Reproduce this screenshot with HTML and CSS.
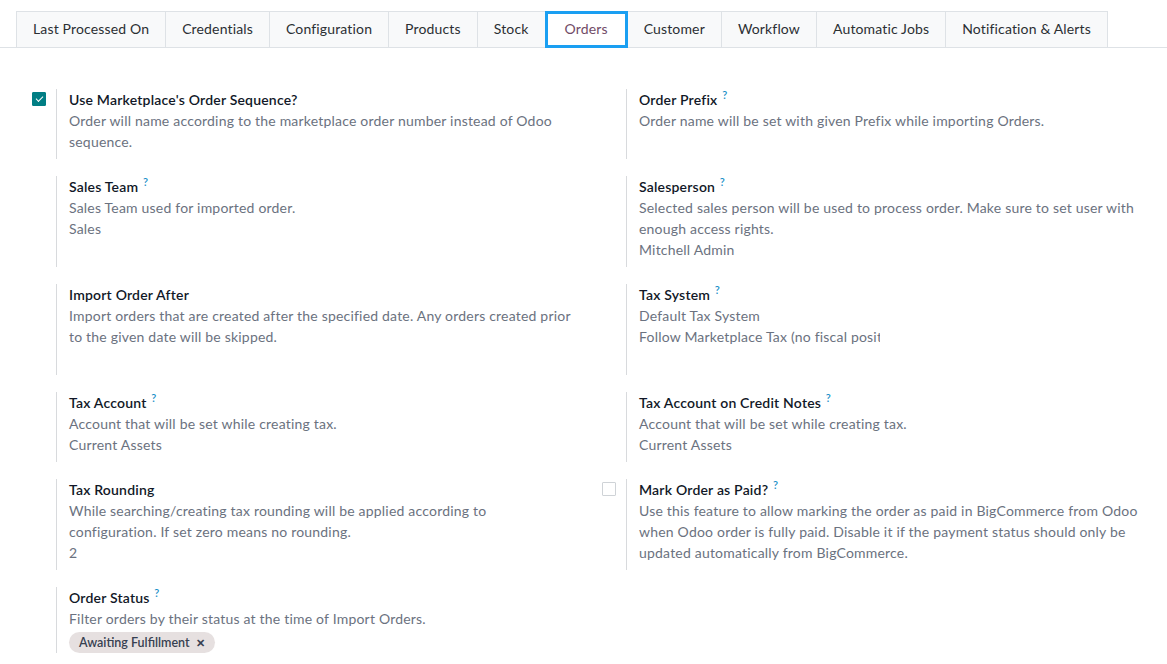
FILE: index.html
```html
<!DOCTYPE html>
<html lang="en">
<head>
    <meta charset="UTF-8">
    <meta name="viewport" content="width=device-width, initial-scale=1.0">
    <title>Marketplace settings - Orders</title>
    <link rel="stylesheet" href="styles.css">
</head>
<body>
    <ul class="tabs">
        <li class="tab">Last Processed On</li>
        <li class="tab">Credentials</li>
        <li class="tab">Configuration</li>
        <li class="tab">Products</li>
        <li class="tab">Stock</li>
        <li class="tab active">Orders</li>
        <li class="tab">Customer</li>
        <li class="tab">Workflow</li>
        <li class="tab">Automatic Jobs</li>
        <li class="tab">Notification &amp; Alerts</li>
    </ul>

    <div class="settings">
        <div class="setting">
            <div class="left-pane"><span class="check checked"></span></div>
            <div class="right-pane">
                <div class="label">Use Marketplace's Order Sequence?</div>
                <div class="desc">Order will name according to the marketplace order number instead of Odoo sequence.</div>
            </div>
        </div>
        <div class="setting">
            <div class="left-pane"></div>
            <div class="right-pane">
                <div class="label">Order Prefix <sup>?</sup></div>
                <div class="desc">Order name will be set with given Prefix while importing Orders.</div>
                <div class="field"></div>
            </div>
        </div>

        <div class="setting">
            <div class="left-pane"></div>
            <div class="right-pane">
                <div class="label">Sales Team <sup>?</sup></div>
                <div class="desc">Sales Team used for imported order.</div>
                <div class="field">Sales</div>
            </div>
        </div>
        <div class="setting">
            <div class="left-pane"></div>
            <div class="right-pane">
                <div class="label">Salesperson <sup>?</sup></div>
                <div class="desc">Selected sales person will be used to process order. Make sure to set user with enough access rights.</div>
                <div class="field">Mitchell Admin</div>
            </div>
        </div>

        <div class="setting">
            <div class="left-pane"></div>
            <div class="right-pane">
                <div class="label">Import Order After</div>
                <div class="desc">Import orders that are created after the specified date. Any orders created prior to the given date will be skipped.</div>
                <div class="field"></div>
            </div>
        </div>
        <div class="setting">
            <div class="left-pane"></div>
            <div class="right-pane">
                <div class="label">Tax System <sup>?</sup></div>
                <div class="desc">Default Tax System</div>
                <div class="field select">Follow Marketplace Tax (no fiscal posit</div>
            </div>
        </div>

        <div class="setting">
            <div class="left-pane"></div>
            <div class="right-pane">
                <div class="label">Tax Account <sup>?</sup></div>
                <div class="desc">Account that will be set while creating tax.</div>
                <div class="field">Current Assets</div>
            </div>
        </div>
        <div class="setting">
            <div class="left-pane"></div>
            <div class="right-pane">
                <div class="label">Tax Account on Credit Notes <sup>?</sup></div>
                <div class="desc">Account that will be set while creating tax.</div>
                <div class="field">Current Assets</div>
            </div>
        </div>

        <div class="setting">
            <div class="left-pane"></div>
            <div class="right-pane">
                <div class="label">Tax Rounding</div>
                <div class="desc">While searching/creating tax rounding will be applied according to configuration. If set zero means no rounding.</div>
                <div class="field">2</div>
            </div>
        </div>
        <div class="setting">
            <div class="left-pane"><span class="check"></span></div>
            <div class="right-pane">
                <div class="label">Mark Order as Paid? <sup>?</sup></div>
                <div class="desc">Use this feature to allow marking the order as paid in BigCommerce from Odoo when Odoo order is fully paid. Disable it if the payment status should only be updated automatically from BigCommerce.</div>
            </div>
        </div>

        <div class="setting">
            <div class="left-pane"></div>
            <div class="right-pane">
                <div class="label">Order Status <sup>?</sup></div>
                <div class="desc">Filter orders by their status at the time of Import Orders.</div>
                <div class="tags">
                    <span class="tag">Awaiting Fulfillment <span class="tag-remove">&#x2715;</span></span>
                </div>
            </div>
        </div>
    </div>
</body>
</html>
```
FILE: styles.css
```css
* {
    box-sizing: border-box;
}

body {
    margin: 0;
    padding: 0;
    font-size: 14px;
    line-height: 21px;
    color: #212529;
    font-family: Lato, "Open Sans", sans-serif;
    background-color: #fff;
}

/* notebook tabs */
.tabs {
    display: flex;
    list-style: none;
    margin: 11px 0 0;
    padding: 0 0 0 16px;
    border-bottom: 1px solid #dee2e6;
}

.tab {
    height: 37px;
    padding: 6px 16px;
    margin-bottom: -1px;
    border: 1px solid #dee2e6;
    border-left-width: 0;
    background-color: #f8f9fa;
    color: #2b2f33;
    letter-spacing: 0.15px;
    white-space: nowrap;
}

.tab:first-child {
    border-left-width: 1px;
}

.tab.active {
    background-color: #fff;
    color: #714b67;
    border: 3px solid #1a9ff2;
    padding: 4px 17px;
    margin-left: -1px;
}

/* settings grid */
.settings {
    display: grid;
    grid-template-columns: 570px 570px;
    row-gap: 17px;
    padding: 41px 0 0 16px;
    letter-spacing: 0.2px;
}

.setting {
    display: flex;
    align-items: stretch;
}

.left-pane {
    width: 40px;
    flex: none;
    padding: 3px 0 0 16px;
}

.right-pane {
    flex: 1;
    border-left: 1px solid #d8dadd;
    padding-left: 12px;
    padding-right: 12px;
}

.check {
    display: block;
    width: 14px;
    height: 14px;
    border: 1px solid #cfd3d7;
    border-radius: 1px;
    background-color: #fff;
}

.check.checked {
    border-color: #017e84;
    background-color: #017e84;
    position: relative;
}

.check.checked::after {
    content: "";
    position: absolute;
    left: 3px;
    top: 3px;
    width: 6px;
    height: 3px;
    border-left: 1.5px solid #fff;
    border-bottom: 1.5px solid #fff;
    transform: rotate(-45deg);
}

.label {
    font-weight: 600;
    color: #111827;
}

.label sup {
    font-size: 11px;
    font-weight: 600;
    color: #1b91c9;
    vertical-align: top;
    line-height: 11px;
    margin-left: 1px;
}

.desc {
    color: #6b7280;
}

.field {
    min-height: 28px;
    padding-bottom: 7px;
    color: #6b7280;
}

.field.select {
    width: 241px;
    white-space: nowrap;
    overflow: hidden;
}

.tags {
    padding-top: 2px;
}

.tag {
    display: inline-block;
    height: 21px;
    padding: 0 10px;
    border-radius: 11px;
    background-color: #e6e0e0;
    color: #374151;
    font-size: 12.5px;
    font-weight: 600;
    line-height: 21px;
    letter-spacing: 0;
}

.tag-remove {
    font-size: 11px;
    margin-left: 3px;
}
```
